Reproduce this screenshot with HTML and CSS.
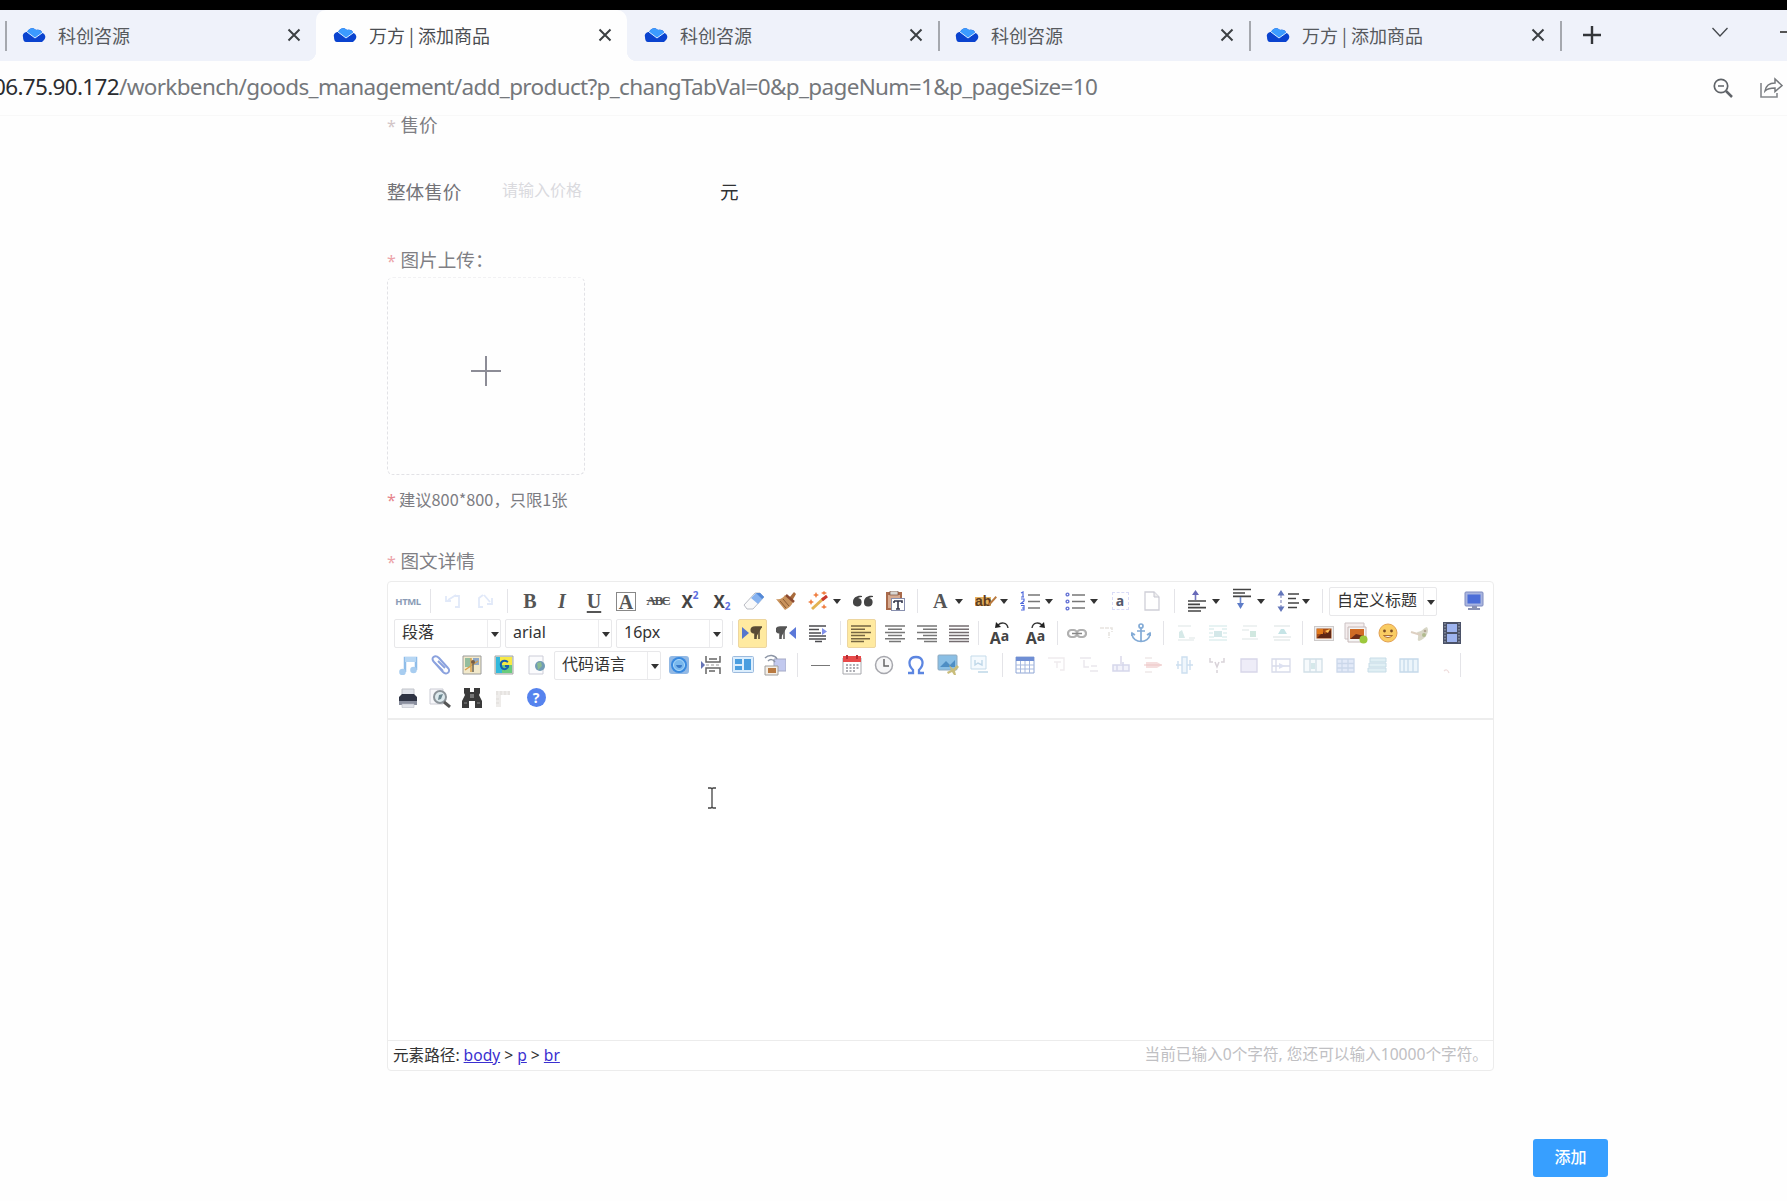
FILE: index.html
```html
<!DOCTYPE html>
<html lang="zh-CN">
<head>
<meta charset="utf-8">
<title>万方 | 添加商品</title>
<link rel="stylesheet" href="styles.css">
</head>
<body>
<svg class="defs" width="0" height="0" aria-hidden="true">
  <symbol id="cloud" viewBox="0 0 24 14"><path d="M1 9C0 6 3 4 5 4 7 0 11-1 14 2 18 1 20 3 20 5 24 6 24 10 22 12L20 14H4C2 14 1 12 1 9Z" fill="#0a43cf"/><path d="M5 4C7 0 11-1 14 2 17 1 20 3 20 5L13 10Z" fill="#3b9bff"/><path d="M5 4l8 6 7-5" fill="none" stroke="#d6ecff" stroke-width="1"/></symbol>
  <symbol id="close" viewBox="0 0 14 14"><path d="M1.5 1.500l11 11M12.500 1.500l-11 11" stroke="#3c4043" stroke-width="2"/></symbol>
  <symbol id="undo" viewBox="0 0 20 20"><path d="M3 5v5h5M5 9l8-5M12 5h4v11h-4" fill="none" stroke="#e1e9f9" stroke-width="1.800"/></symbol>
  <symbol id="redo" viewBox="0 0 20 20"><path d="M17 7v6h-5M15 11L9 4M8 4L4 7v9h4" fill="none" stroke="#e1e9f9" stroke-width="1.800"/></symbol>
  <symbol id="eraser" viewBox="0 0 22 20"><path d="M1 14L12 2h5l4 4L10 18H4Z" fill="#fafafa" stroke="#b9bcc4"/><path d="M8 7l5-5h4l4 4-6 7Z" fill="#86b2ef"/><path d="M13 2h4l4 4-2 2Z" fill="#5489d8"/></symbol>
  <symbol id="broom" viewBox="0 0 20 20"><path d="M13 7l5-6 2 2-4 7Z" fill="#a96b3c"/><path d="M0 8c4 1 7-1 9-4l8 7c-1 3-4 6-8 8Z" fill="#c9925b"/><path d="M4 10l6 7M7 8l6 7" stroke="#8b5a30"/><path d="M10 4l8 7" stroke="#8b4a30" stroke-width="2.500"/></symbol>
  <symbol id="wand" viewBox="0 0 20 20"><path d="M4 18L16 7" stroke="#e3b352" stroke-width="3"/><path d="M14 9l5-4" stroke="#c9372c" stroke-width="3"/><path d="M8 1l1 2 2 1-2 1-1 2-1-2-2-1 2-1ZM3 8l1 2 2 1-2 1-1 2-1-2-2-1 2-1ZM16 0l1 1 2 1-2 1-1 1-1-1-2-1 2-1ZM16 13l1 2 2 1-2 1-1 1-1-1-2-1 2-1Z" fill="#f08043"/></symbol>
  <symbol id="quote" viewBox="0 0 20 20"><path d="M9 5C5 4 0 6 0 11a4.300 4.300 0 1 0 5-4q2-1 4-1ZM20 5c-4-1-9 1-9 6a4.300 4.300 0 1 0 5-4q2-1 4-1Z" fill="#444"/></symbol>
  <symbol id="paste" viewBox="0 0 20 20"><rect x="1" y="1" width="16" height="18" fill="#a96a4b"/><rect x="3" y="4" width="12" height="13" fill="#d7ab91"/><rect x="5" y="0" width="8" height="4" fill="#d9d6d2" stroke="#785140" stroke-width=".7"/><rect x="6.500" y="7.500" width="13" height="12" fill="#fff" stroke="#888fae"/><path d="M9 10h8v2M9 10v2M13 10v8M11 18h4" stroke="#34364c" stroke-width="1.600" fill="none"/></symbol>
  <symbol id="ol" viewBox="0 0 20 20"><path d="M8 4h12M8 10.500h12M8 17h12" stroke="#777" stroke-width="1.500"/><path d="M1 2l2-1v5M1 6h3M1 8h3v2L1 12.500h3M1 14.500h3v4.500H1M2 17h2" stroke="#4f69dc" stroke-width="1.200" fill="none"/></symbol>
  <symbol id="ul" viewBox="0 0 20 20"><path d="M7 4h13M7 10.500h13M7 17h13" stroke="#777" stroke-width="1.500"/><g fill="none" stroke="#6573d5" stroke-width="1.400"><circle cx="2.500" cy="3.500" r="1.400"/><circle cx="2.500" cy="10.500" r="1.400"/><circle cx="2.500" cy="17.500" r="1.400"/></g></symbol>
  <symbol id="doc" viewBox="0 0 20 20"><path d="M3 1h9l5 5v13H3Z" fill="#fff" stroke="#cfcfd8" stroke-width="1.300"/><path d="M12 1v5h5" fill="#eee" stroke="#c6c6d0"/></symbol>
  <symbol id="rowtop" viewBox="0 0 20 22"><path d="M8.500 10V4" stroke="#7678bd" stroke-width="1.600"/><path d="M8.500 0l3.500 5H5Z" fill="#6668b8"/><path d="M1 11h18M1 14.300h12M1 17.600h18M1 21h13" stroke="#444" stroke-width="1.700"/></symbol>
  <symbol id="rowbot" viewBox="0 0 20 22"><path d="M1 1.500h18M1 5h12M1 8.300h18" stroke="#444" stroke-width="1.700"/><path d="M8.500 9v8" stroke="#7089cc" stroke-width="1.600"/><path d="M8.500 21l3.500-6H5Z" fill="#5d7cc8"/></symbol>
  <symbol id="lineh" viewBox="0 0 22 22"><path d="M4 5v13" stroke="#9298c6" stroke-width="1.300" stroke-dasharray="3 2"/><path d="M4 0l3.500 5.500h-7ZM4 22l3.500-5.500h-7Z" fill="#6477bb"/><path d="M11 4h11M11 8.500h8M11 13h11M11 17.500h9" stroke="#444" stroke-width="1.500"/></symbol>
  <symbol id="monitor" viewBox="0 0 20 20"><rect x="1" y="1" width="18" height="14" rx="1" fill="#a9b5df" stroke="#7e8bc0"/><rect x="3.500" y="3.500" width="13" height="9" fill="#4b6dd8"/><path d="M8 15h5v2H8ZM4 17h12v2H4Z" fill="#8991b3"/></symbol>
  <symbol id="ltr" viewBox="0 0 20 20"><path d="M0 4l7 6-7 6Z" fill="#5676cc"/><path d="M20 4h-7c-5 0-5 6 0 6v6M17 4v12M14 4v12" fill="#5a4c36" stroke="#5a4c36" stroke-width="1.600"/></symbol>
  <symbol id="rtl" viewBox="0 0 20 20"><path d="M20 4l-7 6 7 6Z" fill="#5b78d8"/><path d="M11 4H4c-5 0-5 6 0 6v6M8 4v12M5 4v12" fill="#555" stroke="#555" stroke-width="1.500"/></symbol>
  <symbol id="indent" viewBox="0 0 20 20"><path d="M1 3h17M1 6.500h10M1 10h12M1 13h17M1 16h17M7 18.500h7" stroke="#4c4c50" stroke-width="1.500"/><path d="M14 5l5 3.500-5 3.500Z" fill="#8190ea"/></symbol>
  <symbol id="al" viewBox="0 0 20 20"><path d="M0 3h20M0 6.200h14M0 9.400h20M0 12.600h14M0 15.800h19M0 18.500h13" stroke="#766642" stroke-width="1.500"/></symbol>
  <symbol id="ac" viewBox="0 0 20 20"><path d="M0 3h20M3 6.200h14M0 9.400h20M3 12.600h14M0 15.800h20M4 18.500h12" stroke="#777" stroke-width="1.500"/></symbol>
  <symbol id="ar" viewBox="0 0 20 20"><path d="M0 3h20M6 6.200h14M0 9.400h20M6 12.600h14M0 15.800h20M7 18.500h13" stroke="#777" stroke-width="1.500"/></symbol>
  <symbol id="aj" viewBox="0 0 20 20"><path d="M0 3h20M0 6.200h20M0 9.400h20M0 12.600h20M0 15.800h20M0 18.500h20" stroke="#746d70" stroke-width="1.500"/></symbol>
  <symbol id="arcl" viewBox="0 0 14 8"><path d="M13 7C12 1 6 1 3 4" fill="none" stroke="#333" stroke-width="1.400"/><path d="M0 7l1-6 5 5Z" fill="#222"/></symbol>
  <symbol id="link" viewBox="0 0 20 20"><g fill="none" stroke="#b0b0b0" stroke-width="2.200"><rect x="1" y="7" width="9" height="7" rx="3.500"/><rect x="10" y="7" width="9" height="7" rx="3.500"/></g><path d="M5 10.500h10" stroke="#888" stroke-width="1.500"/></symbol>
  <symbol id="unlink" viewBox="0 0 20 20"><path d="M1 5h12v4M10 9v6" fill="none" stroke="#e7e4e0" stroke-width="1.600" stroke-dasharray="4 1"/></symbol>
  <symbol id="anchor" viewBox="0 0 20 20"><g fill="none" stroke="#83abd6" stroke-width="1.700"><circle cx="10" cy="3" r="2"/><path d="M10 5v14M6 8h8M1 11c1 10 17 10 18 0M0 13l1-3 3 2M20 13l-1-3-3 2"/></g></symbol>
  <symbol id="fl" viewBox="0 0 20 20"><path d="M2 3h13M13 15h6M2 17h16" stroke="#e9eeee" stroke-width="1.300"/><path d="M3 15V9l3-2 3 8Z" fill="#d6e9e8"/></symbol>
  <symbol id="fc" viewBox="0 0 20 20"><path d="M1 3h18M1 6h5M14 6h5M1 10h4M15 10h4M1 17h18M1 14h5M14 14h5" stroke="#dff0f0" stroke-width="1.300"/><path d="M6 8h8v6H6Z" fill="#d4e8e9"/></symbol>
  <symbol id="fr" viewBox="0 0 20 20"><path d="M3 3h14M2 7h7M2 16h16" stroke="#e9eeee" stroke-width="1.300"/><path d="M10 8h6v6h-6Z" fill="#d1e8e0"/></symbol>
  <symbol id="fm" viewBox="0 0 20 20"><path d="M2 3h16M1 14h18M2 17h16" stroke="#e6ebec" stroke-width="1.300"/><path d="M6 11l3-5h3l3 5Z" fill="#c5e4e6"/></symbol>
  <symbol id="image" viewBox="0 0 20 20"><rect x=".5" y="3.500" width="19" height="14" fill="#eee" stroke="#ccc9c9"/><rect x="2.500" y="5.500" width="15" height="10" fill="#a94e16"/><path d="M3 15l6-6 2 2 6-4v8Z" fill="#5f2715"/><path d="M11 8l5-2-2 4Z" fill="#ffc25c"/><path d="M3 6h6v5H3Z" fill="#e17a1c"/></symbol>
  <symbol id="images" viewBox="0 0 24 22"><path d="M1 1h19v16H1Z" fill="#f5eeee" stroke="#ccc2c4"/><path d="M4 5h18v15H4Z" fill="#f5f5f5" stroke="#c6b8b8"/><path d="M6 7h14v10H6Z" fill="#d06b25"/><path d="M6 17l6-5 8 2v3Z" fill="#6d2c18"/><circle cx="19.500" cy="17.500" r="4" fill="#9cc83c"/></symbol>
  <symbol id="smile" viewBox="0 0 20 20"><circle cx="10" cy="10" r="9" fill="#f9cc62" stroke="#e2a154"/><circle cx="6.500" cy="8" r="1.400" fill="#794b24"/><circle cx="13.500" cy="8" r="1.400" fill="#794b24"/><path d="M5.500 12.500q4.500 4 9 0Z" fill="#fff" stroke="#aa6b32"/></symbol>
  <symbol id="scrawl" viewBox="0 0 20 20"><path d="M7 9c5 0 6-4 10-5 3 4-1 12-8 14-3-1 1-4-2-9Z" fill="#d8d7c7"/><circle cx="14" cy="12" r="2" fill="#b1bb8f"/><path d="M1 9l10 3" stroke="#ddd0c2" stroke-width="2"/><circle cx="15" cy="8" r="1.300" fill="#b4a695"/></symbol>
  <symbol id="film" viewBox="0 0 20 22"><path d="M1 0h18v22H1Z" fill="#4b5268"/><path d="M5 2h10v8H5ZM5 12h10v8H5Z" fill="#9eb4ef"/><path d="M3 1v20M17 1v20" stroke="#9ba2b2" stroke-width="1.200" stroke-dasharray="1.500 1.500"/></symbol>
  <symbol id="music" viewBox="0 0 20 20"><path d="M7 17V3h11v12" fill="none" stroke="#8fbde9" stroke-width="2.500"/><path d="M7 2h11v5H7Z" fill="#b7d7f4"/><circle cx="4.500" cy="17" r="3.300" fill="#a8cdf0"/><circle cx="15.500" cy="15" r="3.300" fill="#a8cdf0"/></symbol>
  <symbol id="clip" viewBox="0 0 20 20"><path d="M5 8l8 9c4 4 8-1 5-4L9 3C5-1 0 3 4 7l9 9M8 6l7 7" fill="none" stroke="#8ba2de" stroke-width="2"/></symbol>
  <symbol id="map" viewBox="0 0 20 20"><path d="M1 1h18v18H1Z" fill="#f2e9cb" stroke="#9b9c9b"/><path d="M3 3h6v9H3Z" fill="#94bd9e"/><path d="M11 3h6v7h-6Z" fill="#90a9c7"/><path d="M3 15l13-9M9 3v14" stroke="#d8a14c" stroke-width="1.500"/><circle cx="11" cy="7" r="2" fill="#765d45"/><path d="M11 9v8" stroke="#6b6454" stroke-width="1.500"/></symbol>
  <symbol id="gmap" viewBox="0 0 20 20"><path d="M1 1h18v18H1Z" fill="#d7e6dd" stroke="#a6a6a6"/><path d="M2 2h6v16H2Z" fill="#32b9dc"/><path d="M6 2h12v8H6Z" fill="#f8e944"/><path d="M8 10h10v8H8Z" fill="#69cb7c"/><path d="M14 7c-5-3-8 0-7 4s5 4 7 1v-1h-3" fill="none" stroke="#175fae" stroke-width="2"/></symbol>
  <symbol id="frame" viewBox="0 0 20 20"><path d="M3 1h14v18H3Z" fill="#fbfbfd" stroke="#cccdd8"/><circle cx="14" cy="11" r="5" fill="#719bb5"/><path d="M11 8l4-1 1 4-4 4Z" fill="#8abb91"/></symbol>
  <symbol id="app" viewBox="0 0 20 20"><rect x="0" y="1" width="20" height="18" rx="3" fill="#92b9e5"/><circle cx="10" cy="10" r="8" fill="#3889df"/><circle cx="10" cy="10" r="5.500" fill="#79b8ed" stroke="#b1dcfb"/><path d="M7 10c1 4 6 4 6 0Z" fill="#3979c8"/></symbol>
  <symbol id="break" viewBox="0 0 20 20"><path d="M5 1v6h14V1M5 19v-6h14v6M8 4h8M8 16h6" fill="none" stroke="#666" stroke-width="1.500"/><path d="M5 10h15" stroke="#999" stroke-dasharray="3 2"/><path d="M0 6l4 4-4 4Z" fill="#6574b6"/></symbol>
  <symbol id="template" viewBox="0 0 22 20"><rect x=".5" y="1.500" width="21" height="16" rx="1" fill="#dceefd" stroke="#9cbadd"/><path d="M3 4h7v5H3ZM3 11h7v4H3ZM12 4h7v11h-7Z" fill="#4a9ee0"/></symbol>
  <symbol id="bg" viewBox="0 0 22 22"><path d="M10 5h12v12H10Z" fill="#c2c9ef" stroke="#a6aac5"/><path d="M1 12h13v9H1Z" fill="#f4eee5" stroke="#a0a0a0"/><path d="M4 14h8v5H4Z" fill="#b97a42"/><path d="M1 4c4-4 10-3 12 1M4 7c2-2 5-2 7 1" fill="none" stroke="#8c95a5" stroke-width="1.500"/></symbol>
  <symbol id="date" viewBox="0 0 20 20"><path d="M1 3h18v16H1Z" fill="#fff" stroke="#a7a8ad"/><path d="M1 1h18v6H1Z" fill="#e84a4a"/><path d="M5 0v4M15 0v4" stroke="#b62e34" stroke-width="2"/><path d="M4 10h13M4 13h13M4 16h9" stroke="#92949c" stroke-width="1.600" stroke-dasharray="2 1.500"/></symbol>
  <symbol id="clock" viewBox="0 0 20 20"><circle cx="10" cy="10" r="8.500" fill="#f7f7f8" stroke="#a6a7ad" stroke-width="1.500"/><path d="M10 4v7h5" fill="none" stroke="#666" stroke-width="1.500"/></symbol>
  <symbol id="omega" viewBox="0 0 20 20"><path d="M2 18h5v-3C1 9 3 2 10 2s9 7 3 13v3h5" fill="none" stroke="#5c86e1" stroke-width="2.300"/></symbol>
  <symbol id="snap" viewBox="0 0 22 22"><rect x="1" y="1" width="19" height="15" rx="1" fill="#8abfe5" stroke="#8eaac0"/><path d="M3 13l6-6 4 4 5-5v7Z" fill="#4e8ec4"/><path d="M12 11l4 4 4-4 2 2-4 4 1 4h-2l-2-3-4 2-1-2 4-2Z" fill="#c9bd7b"/></symbol>
  <symbol id="wimg" viewBox="0 0 20 20"><path d="M1 1h15v13H1Z" fill="#f5fafe" stroke="#c5dbea"/><path d="M5 5v5l3-2 4 2V5M8 17h10" fill="none" stroke="#bfd7e8" stroke-width="1.400"/></symbol>
  <symbol id="table" viewBox="0 0 20 20"><path d="M1 2h18v16H1Z" fill="#fff" stroke="#8fa6d5"/><path d="M1 2h18v4H1Z" fill="#6f8ed4"/><path d="M1 10h18M1 14h18M5.500 6v12M10 6v12M14.500 6v12" stroke="#a7b9df"/></symbol>
  <symbol id="tdel" viewBox="0 0 20 20"><path d="M1 3h16v12h-4M7 7h7M10 7v6" fill="none" stroke="#efecee" stroke-width="1.400"/></symbol>
  <symbol id="tins" viewBox="0 0 20 20"><path d="M1 3h11M5 5v7h5M12 11h6M11 16h8" fill="none" stroke="#eae7ed" stroke-width="1.400"/></symbol>
  <symbol id="rowin" viewBox="0 0 20 20"><path d="M10 1v8" stroke="#d8d6e9" stroke-width="1.400"/><path d="M2 10h16v6H2ZM6 10v6M12 7v9" fill="#f3f3fb" stroke="#d6d7eb" stroke-width="1.500"/></symbol>
  <symbol id="rowdel" viewBox="0 0 20 20"><path d="M2 3h7M2 17h7" stroke="#e6dddd"/><path d="M3 7h11l5 3-5 3H3Z" fill="#f5dede"/><path d="M1 10h18" stroke="#edc6c6"/></symbol>
  <symbol id="colin" viewBox="0 0 20 20"><path d="M7 2h5v16H7ZM1 10h6M3 6v8M15 5v10M12 10h6" fill="#eff6fc" stroke="#cddff0" stroke-width="1.400"/></symbol>
  <symbol id="coldel" viewBox="0 0 20 20"><path d="M3 3v4h3M17 3v4h-3M8 7l2 5 2-5M10 15v3" fill="none" stroke="#d9d3d9" stroke-width="1.500"/></symbol>
  <symbol id="cell" viewBox="0 0 20 20"><path d="M2 4h16v13H2Z" fill="#eeedf8" stroke="#d7d6e9" stroke-width="1.300"/></symbol>
  <symbol id="cellr" viewBox="0 0 20 20"><path d="M1 4h18v13H1ZM1 11h18M5 4v13" fill="none" stroke="#d8dbea" stroke-width="1.300"/><path d="M8 8l6 3-6 3Z" fill="#dde1f1"/></symbol>
  <symbol id="celld" viewBox="0 0 20 20"><path d="M1 4h18v13H1ZM7 4v13M13 4v13" fill="#f6fafc" stroke="#d1dfe7" stroke-width="1.300"/><path d="M8 8h4v6H8Z" fill="#d5e8ea"/></symbol>
  <symbol id="cells" viewBox="0 0 20 20"><path d="M2 4h17v13H2ZM2 8.500h17M2 13h17M7 4v13M13 4v13" fill="#e3eaf8" stroke="#cbd7ea" stroke-width="1.300"/></symbol>
  <symbol id="srows" viewBox="0 0 20 20"><path d="M3 3h16v4H3ZM2 8h17v4H2ZM1 13h18v4H1Z" fill="#e0eff4" stroke="#c7dce7"/></symbol>
  <symbol id="scols" viewBox="0 0 20 20"><path d="M1 4h18v13H1ZM5 4v13M9 4v13M14 4v13" fill="#ecf5fb" stroke="#c5d9ea" stroke-width="1.300"/></symbol>
  <symbol id="chart" viewBox="0 0 20 20"><path d="M13 16q3-3 5 2" fill="none" stroke="#efdddd" stroke-width="1.300"/></symbol>
  <symbol id="print" viewBox="0 0 20 20"><path d="M4 1h12v8H4Z" fill="#e1e4eb" stroke="#c2c4ca"/><path d="M1 9l3-3h12l3 3v6H1Z" fill="#2f3444"/><path d="M1 13h18v4H1Z" fill="#8a8f9e"/><path d="M4 16h12v3.500H4Z" fill="#e2e4ea" stroke="#bbbec6" stroke-width=".6"/></symbol>
  <symbol id="preview" viewBox="0 0 22 20"><path d="M1 1h13v15H1Z" fill="#f7f7fa" stroke="#cbccd4"/><circle cx="11" cy="9" r="6" fill="#dce9ed" stroke="#8b9399" stroke-width="2"/><path d="M9 12l1-5 4-1-2 5Z" fill="#6d8790"/><path d="M15 14l6 5" stroke="#555" stroke-width="3"/></symbol>
  <symbol id="search" viewBox="0 0 20 20"><path d="M2 0h6v4h4V0h6v5l-1 2 3 6v7h-7v-7H7v7H0v-7l3-6-1-2Z" fill="#3a3a3a"/><path d="M8 6h4v4H8Z" fill="#777"/><path d="M2 15h3M15 15h3" stroke="#888"/></symbol>
  <symbol id="drafts" viewBox="0 0 20 20"><path d="M2 3h14v4H7v12H2Z" fill="#eeecea"/><path d="M3 3v4M7 3v4M11 3v4M15 3v4M2 11h3M2 15h3" stroke="#dedbd8"/></symbol>
</svg>

<div class="black-bar"></div>
<header class="tabs">
  <div class="tab lead"><svg class="logo"><use href="#cloud"/></svg><span>科创咨源</span><svg class="x"><use href="#close"/></svg></div>
  <div class="tab active"><svg class="logo"><use href="#cloud"/></svg><span>万方 | 添加商品</span><svg class="x"><use href="#close"/></svg></div>
  <div class="tab"><svg class="logo"><use href="#cloud"/></svg><span>科创咨源</span><svg class="x"><use href="#close"/></svg></div>
  <div class="tab split"><svg class="logo"><use href="#cloud"/></svg><span>科创咨源</span><svg class="x"><use href="#close"/></svg></div>
  <div class="tab split"><svg class="logo"><use href="#cloud"/></svg><span>万方 | 添加商品</span><svg class="x"><use href="#close"/></svg></div>
  <div class="tab-end">
    <svg class="new-tab" viewBox="0 0 20 20"><path d="M10 1v18M1 10h18" stroke="#333639" stroke-width="2.400"/></svg>
    <svg class="chev" viewBox="0 0 16 10"><path d="M.5 1L8 9l7.500-8" fill="none" stroke="#44484c" stroke-width="1.300"/></svg>
    <i class="minimize"></i>
  </div>
</header>
<div class="address">
  <div class="url"><b>06.75.90.172</b>/workbench/goods_management/add_product?p_changTabVal=0&amp;p_pageNum=1&amp;p_pageSize=10</div>
  <svg class="lens" viewBox="0 0 20 20"><circle cx="8" cy="8" r="6.700" fill="none" stroke="#5f6368" stroke-width="1.700"/><path d="M5 8h6" stroke="#5f6368" stroke-width="1.500"/><path d="M13 13l6 6" stroke="#5f6368" stroke-width="2.500"/></svg>
  <svg class="share" viewBox="0 0 23 20"><path d="M1 5v14h16v-4" fill="none" stroke="#85888c" stroke-width="1.600"/><path d="M5 13c1-6 5-8 10-8V1l7 6.500-7 6V10c-4 0-7 0-10 3Z" fill="none" stroke="#75787c" stroke-width="1.500"/></svg>
</div>

<main class="form">
  <div class="label price"><em class="dim">*</em>售价</div>
  <div class="price-row"><span>整体售价</span><span class="placeholder">请输入价格</span><span class="unit">元</span></div>
  <div class="label upload-label"><em>*</em>图片上传：</div>
  <div class="upload"><svg viewBox="0 0 30 30"><path d="M15 0v30M0 15h30" stroke="#8c8c96" stroke-width="2"/></svg></div>
  <div class="hint"><em>*</em>建议800*800，只限1张</div>
  <div class="label detail-label"><em>*</em>图文详情</div>

  <section class="editor">
    <div class="toolbar">
      <div class="row">
        <span class="tool html">HTML</span><i class="sep"></i>
        <span class="tool"><svg><use href="#undo"/></svg></span><span class="tool"><svg><use href="#redo"/></svg></span><i class="sep"></i>
        <span class="tool serif">B</span><span class="tool serif ital">I</span><span class="tool serif under">U</span><span class="tool serif"><span class="boxed">A</span></span><span class="tool serif strike">ABC</span><span class="tool script">X<sup>2</sup></span><span class="tool script">X<sub>2</sub></span>
        <span class="tool"><svg class="w22"><use href="#eraser"/></svg></span><span class="tool"><svg><use href="#broom"/></svg></span><span class="tool drop"><svg><use href="#wand"/></svg></span><span class="tool"><svg><use href="#quote"/></svg></span><span class="tool"><svg><use href="#paste"/></svg></span><i class="sep"></i>
        <span class="tool drop serif fore">A</span><span class="tool drop back"><span>ab<svg class="pen" viewBox="0 0 12 14"><path d="M1 13L11 2" stroke="#b9793f" stroke-width="2.500"/></svg></span></span><span class="tool drop"><svg><use href="#ol"/></svg></span><span class="tool drop"><svg><use href="#ul"/></svg></span><span class="tool"><span class="select-all">a</span></span><span class="tool"><svg><use href="#doc"/></svg></span><i class="sep"></i>
        <span class="tool drop"><svg class="h22"><use href="#rowtop"/></svg></span><span class="tool drop"><svg class="h22 up"><use href="#rowbot"/></svg></span><span class="tool drop"><svg class="w22 h22"><use href="#lineh"/></svg></span><i class="sep"></i>
        <span class="combo title-combo">自定义标题</span><span class="tool push"><svg><use href="#monitor"/></svg></span>
      </div>
      <div class="row">
        <span class="combo first">段落</span><span class="combo">arial</span><span class="combo">16px</span><i class="sep tight"></i>
        <span class="tool on"><svg><use href="#ltr"/></svg></span><span class="tool"><svg><use href="#rtl"/></svg></span><span class="tool"><svg><use href="#indent"/></svg></span><i class="sep"></i>
        <span class="tool on"><svg><use href="#al"/></svg></span><span class="tool"><svg><use href="#ac"/></svg></span><span class="tool"><svg><use href="#ar"/></svg></span><span class="tool"><svg><use href="#aj"/></svg></span><i class="sep slim"></i>
        <span class="tool case"><svg><use href="#arcl"/></svg><span>A<small>a</small></span></span><span class="tool case flip"><svg><use href="#arcl"/></svg><span>A<small>a</small></span></span><i class="sep slim"></i>
        <span class="tool"><svg><use href="#link"/></svg></span><span class="tool"><svg><use href="#unlink"/></svg></span><span class="tool"><svg><use href="#anchor"/></svg></span><i class="sep"></i>
        <span class="tool"><svg><use href="#fl"/></svg></span><span class="tool"><svg><use href="#fc"/></svg></span><span class="tool"><svg><use href="#fr"/></svg></span><span class="tool"><svg><use href="#fm"/></svg></span><i class="sep tight"></i>
        <span class="tool"><svg><use href="#image"/></svg></span><span class="tool"><svg class="w24 h22"><use href="#images"/></svg></span><span class="tool"><svg><use href="#smile"/></svg></span><span class="tool"><svg><use href="#scrawl"/></svg></span><span class="tool"><svg class="h22"><use href="#film"/></svg></span>
      </div>
      <div class="row third">
        <span class="tool"><svg><use href="#music"/></svg></span><span class="tool"><svg><use href="#clip"/></svg></span><span class="tool"><svg><use href="#map"/></svg></span><span class="tool"><svg><use href="#gmap"/></svg></span><span class="tool"><svg><use href="#frame"/></svg></span>
        <span class="combo first">代码语言</span>
        <span class="tool"><svg><use href="#app"/></svg></span><span class="tool"><svg><use href="#break"/></svg></span><span class="tool"><svg class="w22"><use href="#template"/></svg></span><span class="tool"><svg class="w22 h22"><use href="#bg"/></svg></span><i class="sep"></i>
        <span class="tool"><i class="rule"></i></span><span class="tool"><svg><use href="#date"/></svg></span><span class="tool"><svg><use href="#clock"/></svg></span><span class="tool"><svg><use href="#omega"/></svg></span><span class="tool"><svg class="w22 h22"><use href="#snap"/></svg></span><span class="tool"><svg><use href="#wimg"/></svg></span><i class="sep"></i>
        <span class="tool"><svg><use href="#table"/></svg></span><span class="tool"><svg><use href="#tdel"/></svg></span><span class="tool"><svg><use href="#tins"/></svg></span><span class="tool"><svg><use href="#rowin"/></svg></span><span class="tool"><svg><use href="#rowdel"/></svg></span><span class="tool"><svg><use href="#colin"/></svg></span><span class="tool"><svg><use href="#coldel"/></svg></span><span class="tool"><svg><use href="#cell"/></svg></span><span class="tool"><svg><use href="#cellr"/></svg></span><span class="tool"><svg><use href="#celld"/></svg></span><span class="tool"><svg><use href="#cells"/></svg></span><span class="tool"><svg><use href="#srows"/></svg></span><span class="tool"><svg><use href="#scols"/></svg></span><span class="tool"><svg><use href="#chart"/></svg></span><i class="sep slim"></i>
      </div>
      <div class="row">
        <span class="tool"><svg><use href="#print"/></svg></span><span class="tool"><svg class="w22"><use href="#preview"/></svg></span><span class="tool"><svg><use href="#search"/></svg></span><span class="tool"><svg><use href="#drafts"/></svg></span><span class="tool"><span class="help">?</span></span>
      </div>
    </div>
    <div class="canvas"><svg class="caret" viewBox="0 0 10 22"><path d="M1 1h3l1 1 1-1h3M5 2v18M1 21h3l1-1 1 1h3" fill="none" stroke="#444" stroke-width="1.300"/></svg></div>
    <div class="status"><div>元素路径: <a>body</a> &gt; <a>p</a> &gt; <a>br</a></div><div class="count">当前已输入0个字符, 您还可以输入10000个字符。</div></div>
  </section>
  <button class="submit">添加</button>
</main>
</body>
</html>
```
FILE: styles.css
```css
* { box-sizing: border-box; }
body { margin: 0; width: 1787px; height: 1201px; overflow: hidden; background: #fefefe; font-family: "Noto Sans", "Noto Sans CJK SC", sans-serif; color: #333; }
.defs { position: absolute; }
.black-bar { height: 10px; background: #000; }

.tabs { display: flex; height: 51px; padding-left: 5px; background: #eff2fa; overflow: hidden; }
.tab { position: relative; display: flex; flex: none; align-items: center; width: 311px; padding: 0 15px 1px 17px; font-family: "Noto Sans CJK SC", sans-serif; font-size: 18px; color: #56595d; white-space: nowrap; }
.tab.split::before, .tab.lead::before, .tab-end::before { content: ""; position: absolute; left: 0; top: 11px; width: 1.500px; height: 30px; background: #a5a8ae; }
.tab span { margin-left: 12px; line-height: 44px; }
.logo { width: 24px; height: 14px; }
.x { width: 14px; height: 14px; margin-left: auto; }
.tab.active { background: #fefefe; border-radius: 10px 10px 0 0; color: #4a4d51; }
.tab.active::before, .tab.active::after { content: ""; position: absolute; bottom: 0; width: 10px; height: 10px; }
.tab.active::before { left: -10px; background: radial-gradient(circle at 0 0, transparent 10px, #fefefe 10.500px); }
.tab.active::after { right: -10px; background: radial-gradient(circle at 100% 0, transparent 10px, #fefefe 10.500px); }
.tab-end { position: relative; display: flex; flex: 1; padding-left: 22px; }
.new-tab { flex: none; width: 20px; height: 20px; margin-top: 15px; }
.chev { flex: none; width: 16px; height: 10px; margin: 17px 0 0 110px; }
.minimize { flex: none; width: 8px; height: 1.500px; margin: 21px 0 0 52px; background: #555; }

.address { display: flex; align-items: center; height: 55px; border-bottom: 1px solid #f8f8f8; overflow: hidden; }
.url { width: 1712px; margin-left: -7px; font-size: 22.500px; line-height: 48px; letter-spacing: -.66px; color: #74777b; white-space: nowrap; padding-bottom: 3px; }
.url b { font-weight: 400; color: #2a2c30; }
.lens { width: 20px; height: 22px; margin-left: 8px; }
.share { width: 23px; height: 22px; margin-left: 27px; }

.form { padding-left: 387px; font-family: "Noto Sans CJK SC", sans-serif; }
.label { height: 28px; line-height: 28px; font-size: 18.600px; color: #7f7f84; white-space: nowrap; }
em { display: inline-block; width: 13.500px; font: 400 16px/20px "Noto Sans", sans-serif; color: #eca4aa; }
em.dim { color: #d2c5c7; }
.price { margin-top: -6px; }
.price-row { display: flex; height: 28px; margin-top: 39px; line-height: 28px; font-size: 18.600px; color: #737378; }
.placeholder { width: 218px; margin-left: 40.500px; font-size: 16px; line-height: 24px; color: #dadade; }
.unit { color: #303133; }
.upload-label { margin-top: 40px; }
.upload { display: flex; align-items: center; justify-content: center; width: 198px; height: 198px; margin-top: 4px; padding-bottom: 10px; border: 1px dashed #e2e2e6; border-top-color: #f1f1f3; border-radius: 6px; }
.upload svg { width: 30px; height: 30px; }
.hint { height: 24px; margin-top: 12px; line-height: 24px; font-size: 16.300px; color: #7c7c82; }
.hint em { width: 12px; color: #e6848c; }
.detail-label { margin-top: 35px; }

.editor { width: 1107px; height: 490px; margin-top: 7px; border: 1px solid #ececec; border-radius: 4px; background: #fff; }
.toolbar { height: 138px; padding: 3px 0 0 4px; border-bottom: 2px solid #ededed; }
.row { display: flex; align-items: center; height: 32.200px; }
.tool { display: flex; flex: none; align-items: center; justify-content: center; width: 32px; height: 30px; }
.tool svg { flex: none; width: 20px; height: 20px; }
.tool svg.w22 { width: 22px; }
.tool svg.w24 { width: 24px; }
.tool svg.h22 { height: 22px; }
.tool svg.up { margin-top: -4px; }
.sep { flex: none; width: 13px; height: 24px; background: linear-gradient(#e4e4e8, #e4e4e8) center / 1px 100% no-repeat; }
.sep.tight { width: 10.500px; }
.sep.slim { width: 7px; }
.drop { width: 45px; justify-content: flex-start; padding-left: 6px; position: relative; }
.drop::after, .combo::after { content: ""; position: absolute; border: 4px solid transparent; border-top: 5px solid #333; border-bottom: 0; }
.drop::after { left: 31px; top: 13px; }
.html { font: 700 9.500px "Noto Sans", sans-serif; letter-spacing: -.4px; color: #8b9cb6; }
.serif { font: 700 20px "Liberation Serif", serif; color: #555; }
.ital { font-style: italic; }
.under { text-decoration: underline; text-underline-offset: 3px; }
.boxed { width: 20px; height: 19px; border: 1px solid #888; line-height: 18px; text-align: center; }
.strike { font-size: 13px; letter-spacing: -1.500px; text-decoration: line-through; }
.script { font: 700 17px "Noto Sans", sans-serif; color: #444; }
.script sup, .script sub { font-size: 10px; line-height: 10px; color: #5c6ee0; }
.script sup { margin-top: -12px; }
.script sub { margin-top: 10px; }
.fore { padding-left: 9px; }
.back { font: 700 14px "Liberation Sans", sans-serif; color: #5e3c20; }
.back > span { display: flex; background: linear-gradient(#e5b160, #e5b160) 0 60% / 16px 9px no-repeat; }
.back .pen { width: 9px; height: 15px; margin-left: -3px; }
.select-all { width: 17px; height: 18px; border: 1px dashed #d9dcf8; font: 700 14px/15px "Noto Sans", sans-serif; text-align: center; color: #555a6b; }
.combo { position: relative; flex: none; width: 107px; height: 29px; margin-right: 4px; padding-left: 7px; border: 1px solid #e8e8ea; border-radius: 2px; background: linear-gradient(#ececee, #ececee) right 12px top / 1px 100% no-repeat #fff; font: 16px/25px "Noto Sans", "Noto Sans CJK SC", sans-serif; color: #333; white-space: nowrap; }
.combo::after { right: 1px; top: 12px; }
.combo.first { margin-left: 2px; }
.title-combo { width: 108px; margin-right: 21px; }
.on { width: 29px; height: 29px; margin-right: 3px; border: 1px solid #edd6a0; border-radius: 2px; background: #ffeaa0; }
.case { flex-direction: column; width: 36px; font: 700 16px/14px "Noto Sans", sans-serif; color: #444; }
.case svg { width: 14px; height: 8px; margin-left: 5px; }
.case.flip svg { transform: scaleX(-1); }
.case small { font-size: 14px; vertical-align: 3px; }
.third .combo { margin-right: 2px; }
.rule { width: 19px; height: 1.500px; background: #777; }
.help { width: 19px; height: 19px; border-radius: 50%; background: #5683ee; font: 700 14px/19px "Noto Sans", sans-serif; text-align: center; color: #fff; }
.canvas { height: 320px; padding: 67px 0 0 319px; }
.caret { display: block; width: 10px; height: 22px; }
.status { display: flex; justify-content: space-between; height: 30px; padding: 0 5px 0 5px; border-top: 1px solid #ececec; font: 15.600px/28px "Noto Sans", "Noto Sans CJK SC", sans-serif; color: #333; white-space: nowrap; }
.status a { color: #3a2fd0; text-decoration: underline; }
.count { font-size: 15.650px; line-height: 27px; color: #c0c0c3; }

.submit { display: block; width: 75px; height: 38px; margin: 68px 0 0 1146px; padding: 0 0 4px; border: 0; border-radius: 3px; background: #379fff; color: #fff; font: 500 16px "Noto Sans CJK SC", sans-serif; }
```
